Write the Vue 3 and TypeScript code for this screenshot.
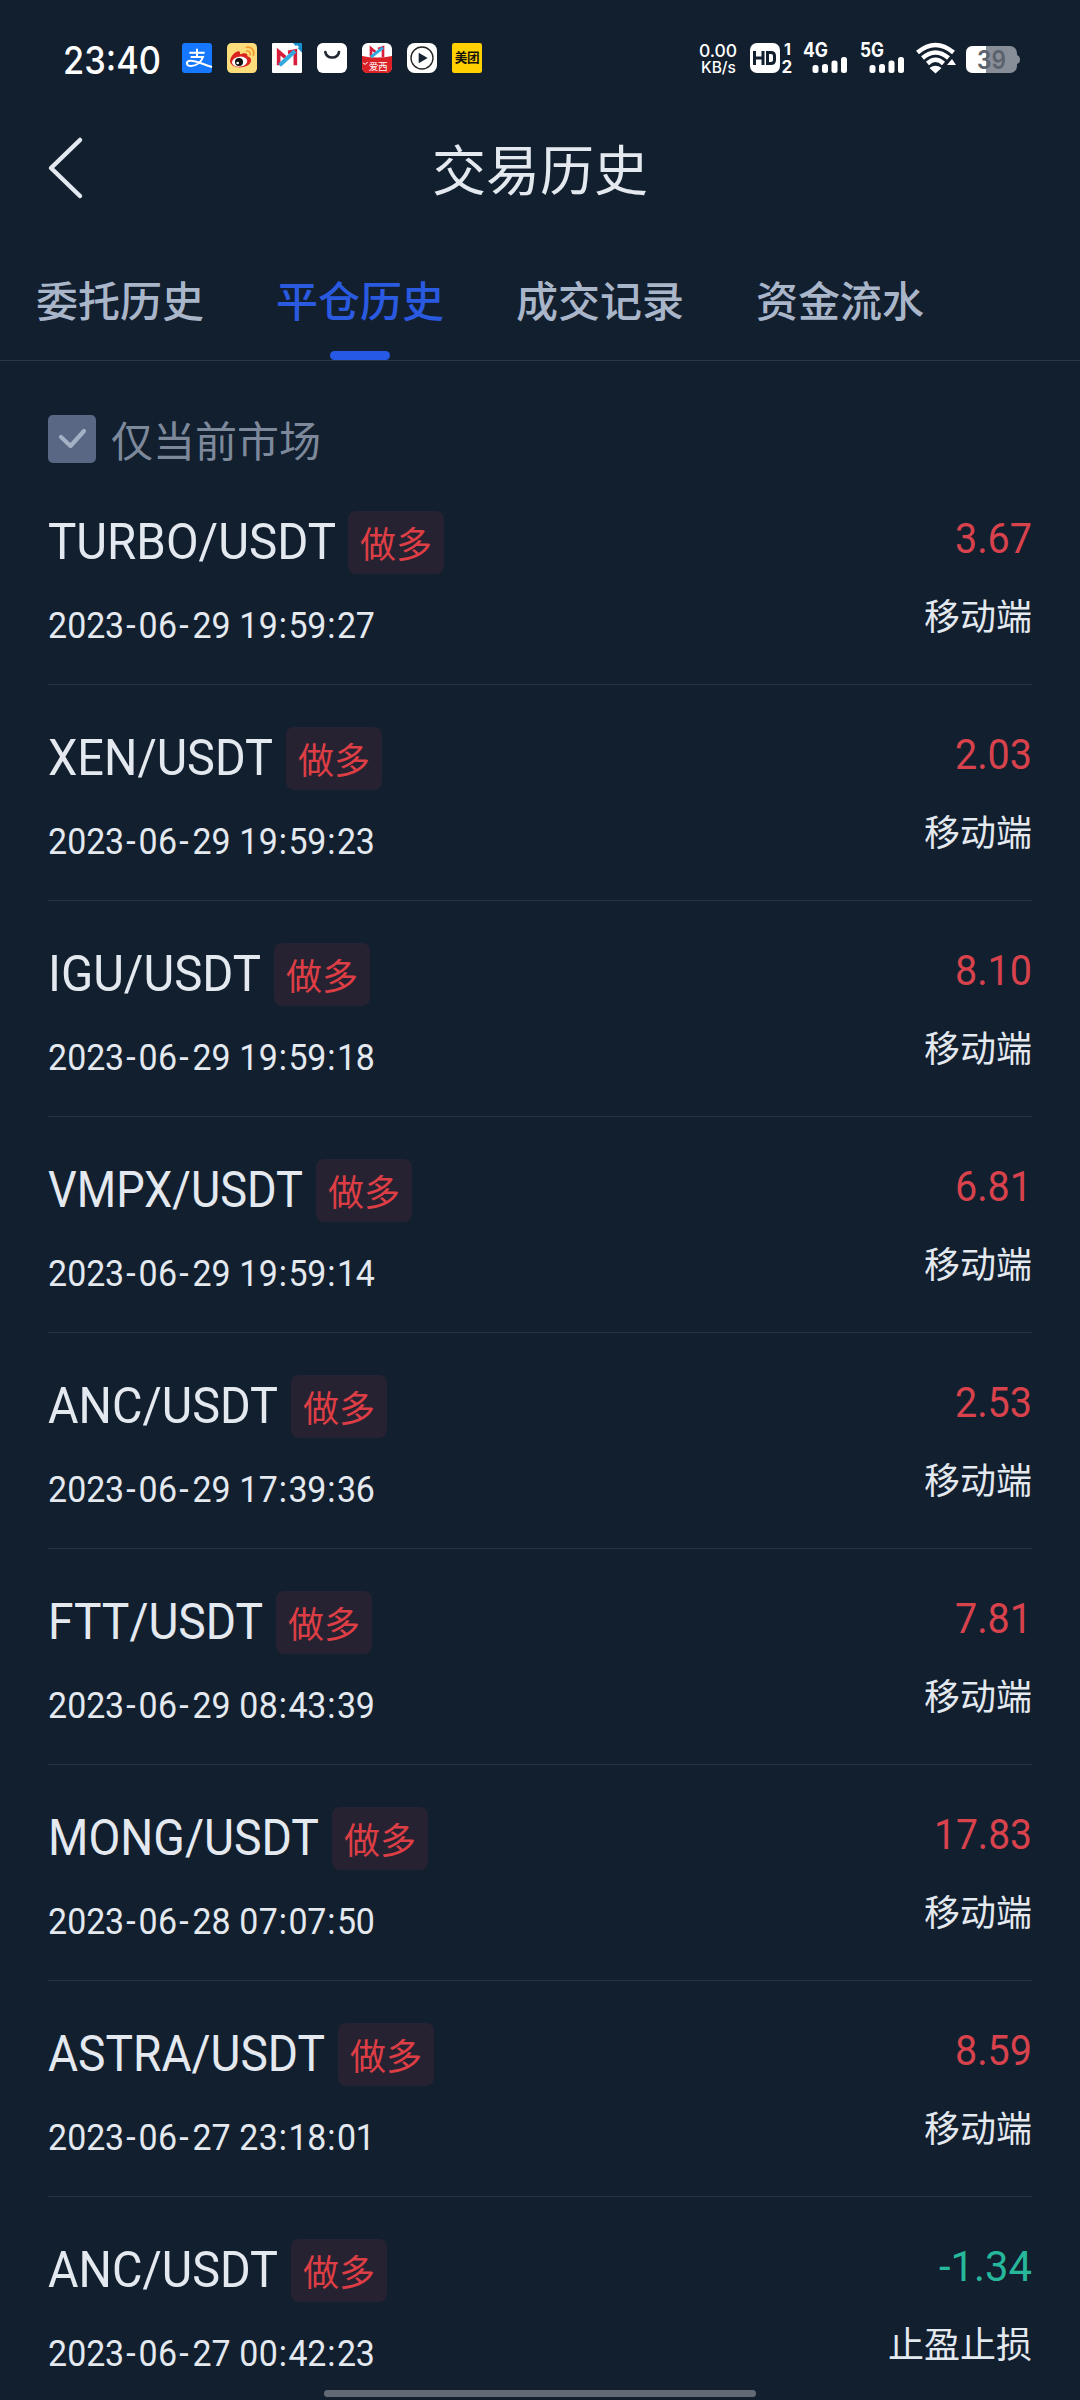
<script setup lang="ts">
interface Trade {
  pair: string
  pairWidth: number
  time: string
  amount: string
  amountWidth: number
  source: string
}

const tabs: string[] = ['委托历史', '平仓历史', '成交记录', '资金流水']
const activeTab = '平仓历史'

const condense = 0.93
const timeStops: string = [
  0, 19.2, 38.2, 57, 78.3, 90.5, 109.9, 131.3, 144.5, 163.6, 183,
  191.2, 210.6, 230.7, 240.4, 259.4, 279.4, 289, 307.6,
].map((x) => (x / condense).toFixed(1)).join(' ')

const trades: Trade[] = [
  { pair: 'TURBO/USDT', pairWidth: 288, time: '2023-06-29 19:59:27', amount: '3.67', amountWidth: 77, source: '移动端' },
  { pair: 'XEN/USDT', pairWidth: 225, time: '2023-06-29 19:59:23', amount: '2.03', amountWidth: 77, source: '移动端' },
  { pair: 'IGU/USDT', pairWidth: 213, time: '2023-06-29 19:59:18', amount: '8.10', amountWidth: 77, source: '移动端' },
  { pair: 'VMPX/USDT', pairWidth: 255, time: '2023-06-29 19:59:14', amount: '6.81', amountWidth: 77, source: '移动端' },
  { pair: 'ANC/USDT', pairWidth: 230, time: '2023-06-29 17:39:36', amount: '2.53', amountWidth: 77, source: '移动端' },
  { pair: 'FTT/USDT', pairWidth: 215, time: '2023-06-29 08:43:39', amount: '7.81', amountWidth: 77, source: '移动端' },
  { pair: 'MONG/USDT', pairWidth: 271, time: '2023-06-28 07:07:50', amount: '17.83', amountWidth: 98, source: '移动端' },
  { pair: 'ASTRA/USDT', pairWidth: 277, time: '2023-06-27 23:18:01', amount: '8.59', amountWidth: 77, source: '移动端' },
  { pair: 'ANC/USDT', pairWidth: 230, time: '2023-06-27 00:42:23', amount: '-1.34', amountWidth: 93, source: '止盈止损' },
]
</script>

<template>
  <div class="screen">
    <div class="status">
      <svg class="clock" width="98" height="40" viewBox="0 0 98 40">
        <text x="0" y="34" textLength="98" lengthAdjust="spacingAndGlyphs">23:40</text>
      </svg>
      <div class="apps">
        <svg viewBox="0 0 90 90">
          <rect width="90" height="90" rx="9" fill="#1677ff" />
          <g fill="none" stroke="#fff" stroke-width="6">
            <path d="M22 29H68M45 17V42M26 42H63C58 55 46 68 27 69C11 69 11 54 25 53C42 52 62 64 90 72" />
          </g>
        </svg>
        <svg viewBox="0 0 90 90">
          <rect width="90" height="90" rx="14" fill="#fddc7c" />
          <path d="M9 55C10 40 25 24 35 25C41 26 39 34 39 34C53 27 64 31 61 40C72 43 76 52 69 61C58 77 13 80 9 55Z" fill="#d9241f" />
          <ellipse cx="38" cy="56" rx="23" ry="15" fill="#fff" transform="rotate(-8 38 56)" />
          <circle cx="36" cy="57" r="12" fill="#111" />
          <circle cx="32" cy="60" r="4" fill="#fff" />
          <g fill="none" stroke="#f29a2e" stroke-width="5" stroke-linecap="round">
            <path d="M58 13C74 10 84 23 79 37M59 24C67 23 71 29 69 35" />
          </g>
        </svg>
        <svg viewBox="0 0 90 90">
          <rect width="90" height="90" rx="3" fill="#fff" />
          <path d="M63 0H90V29Z" fill="#168fcd" />
          <path d="M75 7V16M70 12H80" stroke="#fff" stroke-width="4" />
          <path d="M20 67V26L40 43M48 28L70 24V67" fill="none" stroke="#d81e3b" stroke-width="11" />
          <path d="M23 67L69 24" stroke="#32a9df" stroke-width="12" />
        </svg>
        <svg viewBox="0 0 90 90">
          <rect width="90" height="90" rx="18" fill="#fff" />
          <path d="M25 27C29 49 62 49 66 27" fill="none" stroke="#222831" stroke-width="8" stroke-linecap="round" />
        </svg>
        <svg viewBox="0 0 90 90">
          <rect width="90" height="90" rx="18" fill="#fff" />
          <path d="M0 39Q45 48 90 39V72Q90 90 72 90H18Q0 90 0 72Z" fill="#da2125" />
          <path d="M27 41V16L43 29M48 18L63 13V43" fill="none" stroke="#d81e3b" stroke-width="8" />
          <path d="M27 42L63 14" stroke="#32a9df" stroke-width="9" />
          <text x="20" y="80" class="cjk" font-size="29" fill="#fff" textLength="57">爱西</text>
          <path d="M3 59Q9 69 17 57" fill="none" stroke="#fff" stroke-width="3" />
        </svg>
        <svg viewBox="0 0 90 90">
          <rect width="90" height="90" rx="23" fill="#fff" />
          <circle cx="45" cy="45" r="33" fill="none" stroke="#222" stroke-width="4" />
          <path d="M35 29V61L62 45Z" fill="#172332" />
        </svg>
        <svg viewBox="0 0 90 90">
          <rect width="90" height="90" rx="7" fill="#ffd100" />
          <text x="8" y="58" class="cjk" font-size="38" font-weight="700" fill="#16130b" textLength="75">美团</text>
        </svg>
      </div>
      <div class="signals">
        <svg width="38" height="34" viewBox="0 0 38 34" class="speed">
          <text text-anchor="middle"><tspan x="19" y="14.500" font-size="17.500">0.00</tspan><tspan x="19.500" y="31" font-size="15.500">KB/s</tspan></text>
        </svg>
        <svg width="44" height="32" viewBox="0 0 44 32" class="hd">
          <rect x="0" y="1" width="30" height="30" rx="7" fill="#fff" />
          <path d="M4.500 9V23M13 9V23M4.500 16H13M17.500 10.500V21.500H21Q24.500 21.500 24.500 18V14Q24.500 10.500 21 10.500Z" fill="none" stroke="#121f2f" stroke-width="3" />
          <text font-weight="700"><tspan x="34" y="13" font-size="16">1</tspan><tspan x="31.500" y="30.500" font-size="17">2</tspan></text>
        </svg>
        <svg width="46" height="32" viewBox="0 0 46 32" class="cell">
          <text x="0" y="15" font-size="19.500" textLength="25" lengthAdjust="spacingAndGlyphs">4G</text>
          <g fill="#fff">
            <rect x="9.500" y="23" width="6" height="8" rx="2.500" />
            <rect x="19" y="22" width="6" height="9" rx="2.500" />
            <rect x="28.500" y="18.500" width="6" height="12.500" rx="2.500" />
            <rect x="38" y="15" width="6" height="16" rx="2.500" />
          </g>
        </svg>
        <svg width="46" height="32" viewBox="0 0 46 32" class="cell second">
          <text x="0" y="15" font-size="19.500" textLength="24" lengthAdjust="spacingAndGlyphs">5G</text>
          <g fill="#fff">
            <rect x="9.500" y="23" width="6" height="8" rx="2.500" />
            <rect x="19" y="22" width="6" height="9" rx="2.500" />
            <rect x="28.500" y="18.500" width="6" height="12.500" rx="2.500" />
            <rect x="38" y="15" width="6" height="16" rx="2.500" />
          </g>
        </svg>
        <svg width="40" height="32" viewBox="0 0 40 32" class="wifi">
          <g fill="none" stroke="#fff" stroke-width="4.500">
            <path d="M1.500 10.500Q19.500 -4.500 37.500 10.500" />
            <path d="M6.500 16Q19.500 5 32.500 16" />
            <path d="M11.500 21.500Q19.500 14 27.500 21.500" />
          </g>
          <path d="M13.500 26Q19.500 21.500 25.500 26L19.500 31.500Z" fill="#fff" />
          <path d="M31 23L36 17L40 23Z" fill="#fff" />
        </svg>
        <svg width="54" height="28" viewBox="0 0 54 28">
          <rect width="51" height="27" rx="7" fill="#888e98" />
          <path d="M7 0H20V27H7Q0 27 0 20V7Q0 0 7 0Z" fill="#fff" />
          <path d="M51 9Q54 10 54 13.500T51 18Z" fill="#888e98" />
          <text x="11" y="23" font-size="25" class="level" textLength="29" lengthAdjust="spacingAndGlyphs">39</text>
        </svg>
      </div>
    </div>

    <header class="header">
      <svg class="back" width="36" height="62" viewBox="0 0 36 62">
        <path d="M33 3L4 31L33 59" />
      </svg>
      <h1>交易历史</h1>
    </header>

    <nav class="tabs">
      <div v-for="tab in tabs" :key="tab" class="tab" :class="{ active: tab === activeTab }">
        <span>{{ tab }}</span>
        <i class="bar"></i>
      </div>
    </nav>

    <div class="filter">
      <svg width="48" height="48" viewBox="0 0 48 48">
        <rect width="48" height="48" rx="5" fill="#596784" />
        <path d="M13 22L22.500 31L36 16" fill="none" stroke="#a4b0c3" stroke-width="4.200" stroke-linecap="round" stroke-linejoin="round" />
      </svg>
      <span>仅当前市场</span>
    </div>

    <ul class="list">
      <li v-for="trade in trades" :key="trade.pair + trade.time" class="row">
        <div class="left">
          <div class="title">
            <svg class="pair" :width="trade.pairWidth" height="63">
              <text x="0" y="48" :textLength="trade.pairWidth" lengthAdjust="spacingAndGlyphs">{{ trade.pair }}</text>
            </svg>
            <span class="tag">做多</span>
          </div>
          <svg class="time" width="328" height="40">
            <text :x="timeStops" y="33" :transform="`scale(${condense} 1)`">{{ trade.time }}</text>
          </svg>
        </div>
        <div class="right">
          <svg class="amount" :class="{ loss: trade.amount.startsWith('-') }" :width="trade.amountWidth" height="50">
            <text x="0" y="42" :textLength="trade.amountWidth" lengthAdjust="spacingAndGlyphs">{{ trade.amount }}</text>
          </svg>
          <span class="source">{{ trade.source }}</span>
        </div>
      </li>
    </ul>
    <div class="home"></div>
  </div>
</template>

<style>
body {
  background: #121f2f;
}
</style>

<style scoped>
.screen {
  position: relative;
  width: 1080px;
  height: 2400px;
  overflow: hidden;
  background: #121f2f;
  color: #e4e9f0;
  font-family: Roboto, "Noto Sans CJK SC", sans-serif;
}

svg {
  display: block;
  flex: none;
  overflow: visible;
}

.cjk {
  font-family: "Noto Sans CJK SC", sans-serif;
}

.status {
  box-sizing: border-box;
  display: flex;
  align-items: flex-start;
  height: 100px;
  padding: 40px 0 0 63px;
}

.clock text {
  font-family: Inter, sans-serif;
  font-size: 37.5px;
  font-weight: 500;
  fill: #fff;
}

.apps {
  display: flex;
  gap: 15px;
  padding: 2.5px 0 0 21px;
}

.apps svg {
  width: 30px;
  height: 30px;
}

.signals {
  display: flex;
  align-items: flex-start;
  margin-left: 217px;
  padding-top: 2px;
  fill: #fff;
  font-family: Inter, sans-serif;
}

.speed {
  font-weight: 500;
}

.hd {
  margin-left: 13px;
}

.cell {
  margin-left: 9px;
  font-weight: 700;
}

.cell.second {
  margin-left: 11px;
}

.wifi {
  margin: 0 10px 0 10px;
}

.signals > svg:last-child {
  margin-top: 4px;
}

.level {
  fill: #5b626d;
  font-weight: 600;
}

.header {
  display: flex;
  align-items: center;
  height: 140px;
  padding-left: 47px;
}

.back {
  margin-top: -4px;
}

.back path {
  fill: none;
  stroke: #e4e9f0;
  stroke-width: 4.5px;
  stroke-linecap: round;
  stroke-linejoin: round;
}

h1 {
  flex: 1;
  margin: -4px 83px 0 0;
  text-align: center;
  font: 400 54px/80px "Noto Sans CJK SC", sans-serif;
}

.tabs {
  box-sizing: border-box;
  display: flex;
  height: 121px;
  border-bottom: 1px solid #2a3747;
}

.tab {
  display: flex;
  flex-direction: column;
  align-items: center;
  justify-content: space-between;
  width: 168px;
  padding: 28px 36px 0;
  color: #a9b5c8;
  font: 500 42px/62px "Noto Sans CJK SC", sans-serif;
}

.bar {
  width: 60px;
  height: 9px;
  border-radius: 5px;
}

.active {
  color: #2a5ae0;
}

.active .bar {
  background: #2659e5;
}

.filter {
  box-sizing: border-box;
  display: flex;
  align-items: flex-start;
  gap: 15px;
  height: 108px;
  padding: 54px 48px 0;
  color: #7d899b;
  font: 400 42px/48px "Noto Sans CJK SC", sans-serif;
}

.list {
  margin: 0;
  padding: 0 48px;
  list-style: none;
}

.row {
  box-sizing: border-box;
  display: flex;
  justify-content: space-between;
  height: 216px;
  padding-top: 42px;
  border-bottom: 1px solid #263445;
}

.title {
  display: flex;
  gap: 13px;
}

.row:first-child .title {
  gap: 12px;
}

.pair text {
  font-size: 49.5px;
  fill: #e4e9f0;
}

.tag {
  box-sizing: border-box;
  width: 96px;
  height: 63px;
  border-radius: 8px;
  background: #272231;
  color: #dd3e45;
  text-align: center;
  font: 400 36px/63px "Noto Sans CJK SC", sans-serif;
}

.time {
  margin-top: 31px;
}

.time text {
  font-size: 36.5px;
  fill: #e4e9f0;
  white-space: pre;
}

.right {
  display: flex;
  flex-direction: column;
  align-items: flex-end;
}

.amount text {
  font-size: 42px;
  fill: #d8424c;
}

.amount.loss text {
  fill: #27b89c;
}

.source {
  margin-top: 26px;
  font: 400 36px/54px "Noto Sans CJK SC", sans-serif;
}

.home {
  position: absolute;
  left: 324px;
  bottom: 3px;
  width: 432px;
  height: 7px;
  border-radius: 4px;
  background: #606974;
}
</style>
